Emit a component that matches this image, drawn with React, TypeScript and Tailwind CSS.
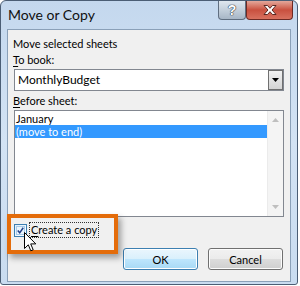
import React from "react";

// Small Win7-style dialog: "Move or Copy"
function HelpButton() {
    return (
        <div className="w-[28px] h-[19px] rounded-b-[4px] border border-t-0 border-[#5f6e80] bg-gradient-to-b from-[#dfe7ef] via-[#c3cfdb] to-[#a7b6c6] flex items-center justify-center">
            <span className="text-[14px] font-bold leading-none text-white [text-shadow:0_0_1px_#2b3440,0_0_1px_#2b3440,0_0_1px_#2b3440] font-['Liberation_Sans',sans-serif]">
                ?
            </span>
        </div>
    );
}

function CloseButton() {
    return (
        <div className="w-[47px] h-[19px] rounded-b-[4px] border border-t-0 border-[#6d2a24] bg-gradient-to-b from-[#e3a79b] via-[#c9503f] to-[#d8715f] flex items-center justify-center">
            <svg width="16" height="12" viewBox="0 0 16 12">
                <path
                    d="M2 1.5 L5.5 1.5 L8 4.3 L10.5 1.5 L14 1.5 L10 6 L14 10.5 L10.5 10.5 L8 7.7 L5.5 10.5 L2 10.5 L6 6 Z"
                    fill="#ffffff"
                    stroke="#4a1a14"
                    strokeWidth="0.9"
                    strokeLinejoin="round"
                />
            </svg>
        </div>
    );
}

function Cursor() {
    return (
        <svg width="13" height="20" viewBox="0 0 13 20">
            <path
                d="M0.5 0.5 L0.5 16.5 L4.3 12.8 L6.8 18.8 L9.2 17.8 L6.7 11.9 L11.8 11.9 Z"
                fill="#ffffff"
                stroke="#000000"
                strokeWidth="1"
                strokeLinejoin="miter"
            />
        </svg>
    );
}

function Checkbox() {
    return (
        <div className="w-[13px] h-[13px] border border-[#3c7fb1] bg-gradient-to-br from-[#dcecfc] to-[#ffffff] p-[1px]">
            <div className="w-full h-full border border-[#a6cbe9] bg-[#eaf4fd] flex items-center justify-center">
                <svg width="9" height="9" viewBox="0 0 9 9">
                    <path d="M1 4.5 L3.5 7.5 L8 1" fill="none" stroke="#1f3f88" strokeWidth="2" />
                </svg>
            </div>
        </div>
    );
}

function DialogButton({ label, isDefault = false }: { label: string; isDefault?: boolean }) {
    return (
        <div
            className={
                isDefault
                    ? "w-[75px] h-[22px] rounded-[3px] border border-[#3c7fb1] bg-[linear-gradient(#eaf6fd_0%,#d9f0fc_50%,#bee6fd_50%,#a7d9f5_100%)] shadow-[inset_0_0_0_1px_#ffffff] flex items-center justify-center"
                    : "w-[75px] h-[22px] rounded-[3px] border border-[#707070] bg-[linear-gradient(#f2f2f2_0%,#ebebeb_50%,#dddddd_50%,#cfcfcf_100%)] shadow-[inset_0_0_0_1px_#fcfcfc] flex items-center justify-center"
            }
        >
            <span className="text-[11px] leading-none text-black">{label}</span>
        </div>
    );
}

export default function App() {
    return (
        <div className="w-[300px] h-[286px] bg-white font-['Lato',sans-serif]">
            <div className="relative w-[298px] h-[285px] rounded-t-[6px] rounded-b-[3px] border border-[#4b5e75] bg-gradient-to-b from-[#c4d8ee] via-[#d3e3f4] to-[#c9dcf0] flex flex-col">
                {/* title bar */}
                <div className="h-[28px] flex items-start justify-between pl-[7px] pr-[4px]">
                    <span className="mt-[6px] text-[14px] leading-[16px] text-[#101010]">Move or Copy</span>
                    <div className="flex">
                        <HelpButton />
                        <CloseButton />
                    </div>
                </div>

                {/* client area */}
                <div className="mx-[6px] h-[253px] border border-[#8aa0b8] bg-[#f0f0f0] px-[6px] pt-[6px] text-[11px] leading-[16px] text-black flex flex-col">
                    <div className="-ml-[1px]">Move selected sheets</div>
                    <div className="-ml-[1px]">
                        <span className="underline underline-offset-2">T</span>o book:
                    </div>
                    <div className="mt-[1px] h-[22px] border border-[#828790] bg-white flex items-center">
                        <span className="flex-1 pl-[3px] text-[12px]">MonthlyBudget</span>
                        <div className="w-[15px] h-[20px] border border-[#707070] bg-gradient-to-b from-[#f2f2f2] to-[#d4d4d4] flex items-center justify-center">
                            <svg width="7" height="4" viewBox="0 0 7 4">
                                <path d="M0 0 L7 0 L3.5 4 Z" fill="#000000" />
                            </svg>
                        </div>
                    </div>
                    <div className="-ml-[1px] mt-[2px]">
                        <span className="underline underline-offset-2">B</span>efore sheet:
                    </div>
                    <div className="mt-[1px] h-[107px] border border-[#828790] bg-white flex">
                        <div className="flex-1 pt-[1px]">
                            <div className="h-[13px] pl-[1px] leading-[13px]">January</div>
                            <div className="h-[13px] pl-[1px] leading-[13px] bg-[#3399ff] text-white">(move to end)</div>
                        </div>
                        <div className="w-[16px] bg-[#f4f4f4] border-l border-[#ebebeb] flex flex-col items-center justify-between py-[7px]">
                            <svg width="7" height="4" viewBox="0 0 7 4">
                                <path d="M0 4 L7 4 L3.5 0 Z" fill="#bfbfbf" />
                            </svg>
                            <svg width="7" height="4" viewBox="0 0 7 4">
                                <path d="M0 0 L7 0 L3.5 4 Z" fill="#bfbfbf" />
                            </svg>
                        </div>
                    </div>
                    <div className="mt-[5px] h-[16px] flex items-center gap-[3px]">
                        <Checkbox />
                        <span className="px-[1px] outline-1 outline-dotted outline-[#333333] leading-[14px]">
                            <span className="underline underline-offset-2">C</span>reate a copy
                        </span>
                    </div>
                    <div className="mt-[10px] flex justify-end gap-[10px] pr-[1px]">
                        <DialogButton label="OK" isDefault />
                        <DialogButton label="Cancel" />
                    </div>
                </div>

                {/* orange highlight annotation */}
                <div className="absolute left-[6px] top-[213px] w-[111px] h-[40px] border-[4px] border-[#e46c0a] shadow-[3px_4px_6px_rgba(0,0,0,0.35)]" />
                {/* mouse pointer */}
                <div className="absolute left-[23px] top-[231px]">
                    <Cursor />
                </div>
            </div>
        </div>
    );
}
